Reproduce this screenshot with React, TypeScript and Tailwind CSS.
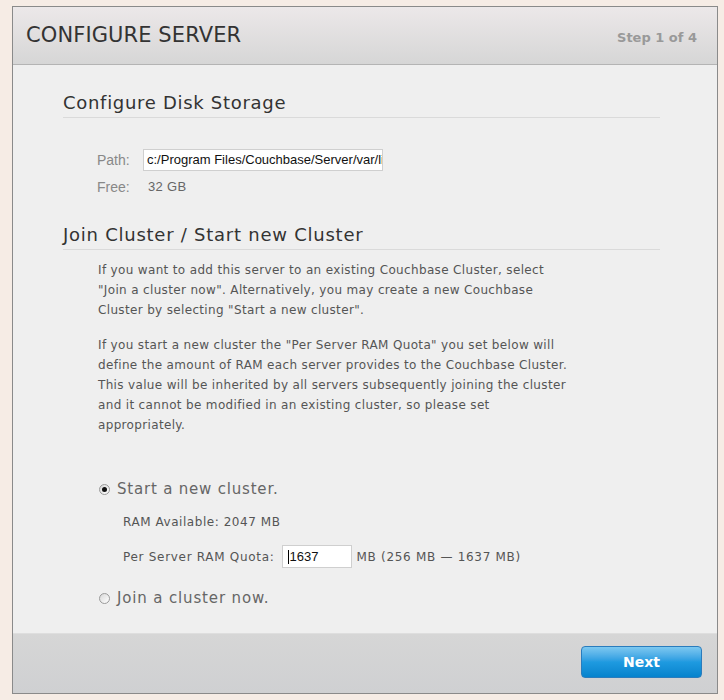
import React from "react";

function Radio({ checked }: { checked?: boolean }) {
  return (
    <span className="relative inline-flex h-[11px] w-[11px] shrink-0 items-center justify-center rounded-full border border-[#9a9a9a] bg-gradient-to-br from-[#d8d8d8] to-white">
      {checked ? <span className="h-[5px] w-[5px] rounded-full bg-[#111]" /> : null}
    </span>
  );
}

export default function App() {
  const sans = { fontFamily: '"DejaVu Sans", Verdana, sans-serif' };
  const arial = { fontFamily: '"Liberation Sans", Arial, sans-serif' };
  return (
    <div className="min-h-[700px] w-[724px] bg-[#f6ece5] pl-[12px] pt-[6px]" style={sans}>
      <div className="flex h-[688px] w-[706px] flex-col border border-[#8a8a8a] bg-[#efefef]">
        {/* header */}
        <div className="flex h-[58px] shrink-0 items-center justify-between border-b border-[#b4b4b4] bg-gradient-to-b from-[#ece8e9] to-[#d6d6d6] pl-[13px] pr-[20px]">
          <div className="text-[21px] leading-none tracking-[0.1px] text-[#333]">CONFIGURE SERVER</div>
          <div className="mt-[4px] text-[13px] font-bold text-[#999]">Step 1 of 4</div>
        </div>

        {/* body */}
        <div className="flex-1 pl-[50px]">
          <div className="mt-[26px] w-[597px] border-b border-[#dadada] pb-[2px] text-[18px] leading-[24px] tracking-[0.7px] text-[#333]">
            Configure Disk Storage
          </div>

          <div className="mt-[31px] flex items-center pl-[34px]" style={arial}>
            <span className="w-[46px] text-[14px] text-[#888]">Path:</span>
            <div className="flex h-[22px] w-[240px] items-center overflow-hidden whitespace-nowrap border border-[#cfcfcf] bg-white pl-[3px] text-[13px] text-[#111]">
              c:/Program Files/Couchbase/Server/var/li
            </div>
          </div>
          <div className="mt-[6px] flex items-center pl-[34px]" style={arial}>
            <span className="w-[51px] text-[14px] leading-[20px] text-[#888]">Free:</span>
            <span className="text-[13px] tracking-[0.3px] text-[#666]">32 GB</span>
          </div>

          <div className="mt-[26px] w-[597px] border-b border-[#dadada] pb-[2px] text-[18px] leading-[24px] tracking-[0.75px] text-[#333]">
            Join Cluster / Start new Cluster
          </div>

          <div className="mt-[10px] whitespace-nowrap pl-[35px] text-[12px] leading-[20px] tracking-[0.34px] text-[#555]">
            <p>
              If you want to add this server to an existing Couchbase Cluster, select
              <br />
              "Join a cluster now". Alternatively, you may create a new Couchbase
              <br />
              Cluster by selecting "Start a new cluster".
            </p>
            <p className="mt-[15px]">
              If you start a new cluster the "Per Server RAM Quota" you set below will
              <br />
              define the amount of RAM each server provides to the Couchbase Cluster.
              <br />
              This value will be inherited by all servers subsequently joining the cluster
              <br />
              and it cannot be modified in an existing cluster, so please set
              <br />
              appropriately.
            </p>
          </div>

          <div className="mt-[44px] flex items-center gap-[7px] pl-[36px]">
            <Radio checked />
            <span className="text-[15px] leading-[20px] tracking-[0.8px] text-[#666]">Start a new cluster.</span>
          </div>
          <div className="mt-[13px] pl-[60px] text-[12px] leading-[20px] tracking-[0.55px] text-[#555]">RAM Available: 2047 MB</div>
          <div className="mt-[13px] flex items-center pl-[60px] text-[12px] tracking-[0.7px] text-[#555]">
            <span>Per Server RAM Quota:</span>
            <div className="ml-[7px] flex h-[23px] w-[70px] items-center border border-[#cfcfcf] bg-white pl-[5px] text-[13px] tracking-normal text-[#111]" style={arial}>
              <span className="mr-[1px] h-[14px] w-[1px] bg-black" />
              1637
            </div>
            <span className="ml-[5px]">MB (256 MB — 1637 MB)</span>
          </div>
          <div className="mt-[20px] flex items-center gap-[7px] pl-[36px]">
            <Radio />
            <span className="text-[15px] leading-[20px] tracking-[0.85px] text-[#666]">Join a cluster now.</span>
          </div>
        </div>

        {/* footer */}
        <div className="flex h-[60px] shrink-0 items-start justify-end border-t border-[#dedede] bg-gradient-to-b from-[#d6d6d6] to-[#cfd0d2] pr-[15px] pt-[12px]">
          <button className="flex h-[32px] w-[121px] items-center justify-center rounded-[4px] border border-[#2a7cbd] bg-gradient-to-b from-[#7cc8f0] via-[#1e9ae0] to-[#0583cd] text-[14px] font-bold text-white" style={sans}>
            Next
          </button>
        </div>
      </div>
    </div>
  );
}
